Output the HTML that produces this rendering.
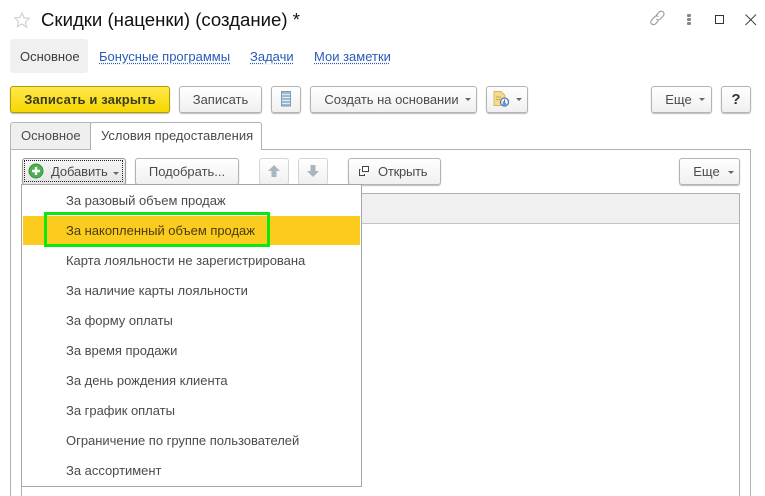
<!DOCTYPE html>
<html><head><meta charset="utf-8">
<style>
html,body{margin:0;padding:0;background:#fff}
#p{position:relative;width:765px;height:496px;overflow:hidden;background:#fff;font-family:"Liberation Sans",sans-serif;font-size:13px;color:#4b4b4b}
#p div,#p svg{position:absolute;box-sizing:border-box}
.t{white-space:nowrap;line-height:16px}
.b{height:27px;border:1px solid #b3b3b3;border-radius:3px;background:linear-gradient(#fff,#f0f0f0);box-shadow:0 1px 1px #bbb;line-height:25px;text-align:center;white-space:nowrap;color:#4b4b4b}
.l{color:#2a5ab8;text-decoration:underline dotted #2a5ab8;text-underline-offset:2px}
.m{left:66px;line-height:16px;white-space:nowrap;color:#4b4b4b;letter-spacing:-.02px}
.a{width:0;height:0;border-left:3px solid transparent;border-right:3px solid transparent;border-top:3px solid #666}
</style></head><body><div id="p">

<svg style="left:13px;top:11px" width="18" height="18" viewBox="0 0 18 18"><path d="M9 2l2.100 4.900 5.200.5-3.900 3.500 1.200 5.200L9 13l-4.600 2.600 1.200-5.200L1.700 6.900l5.200-.5z" fill="#fff" stroke="#d2d2d2" stroke-width="1.200"/></svg>
<div class="t" style="left:41px;top:9px;font-size:18.600px;line-height:22px;color:#111">Скидки (наценки) (создание) *</div>

<svg style="left:648px;top:9px" width="19" height="18" viewBox="0 0 19 18" fill="none" stroke="#999" stroke-width="1.100"><path d="M8 6.500L11 3.200c1.400-1.300 3.300-1.300 4.300-.2s1 2.900-.2 4.100l-2.900 2.900c-1.200 1.100-2.800 1.100-3.800.1"/><path d="M10.500 11.500L7.800 14.600c-1.300 1.300-3.200 1.300-4.300.2s-1-2.800.2-4.100l2.900-2.900c1.200-1.100 2.800-1.100 3.800-.1"/></svg>
<div style="left:687px;top:14px;width:3.500px;height:3px;background:#888;border-radius:1px"></div>
<div style="left:687px;top:18px;width:3.500px;height:3px;background:#888;border-radius:1px"></div>
<div style="left:687px;top:22px;width:3.500px;height:3px;background:#888;border-radius:1px"></div>
<div style="left:715px;top:15px;width:9px;height:9px;border:1px solid #333"></div>
<svg style="left:744px;top:13px" width="14" height="14" viewBox="0 0 14 14"><path d="M1.500 1.500l10.500 10.500M12 1.500L1.500 12" stroke="#444" stroke-width="1" fill="none"/></svg>

<div style="left:10px;top:39px;width:78px;height:34px;background:#f0f0f0;border-radius:3px"></div>
<div class="t" style="left:20px;top:49px;color:#3c3c3c">Основное</div>
<div class="t l" style="left:99px;top:49px">Бонусные программы</div>
<div class="t l" style="left:250px;top:49px">Задачи</div>
<div class="t l" style="left:314px;top:49px">Мои заметки</div>

<div class="b" style="left:10px;top:86px;width:160px;background:linear-gradient(#ffe84d,#f7d700);border-color:#b39c00;font-weight:bold;color:#3c3c1c;letter-spacing:.15px">Записать и закрыть</div>
<div class="b" style="left:179px;top:86px;width:83px">Записать</div>
<div class="b" style="left:271px;top:86px;width:30px"></div>
<svg style="left:281px;top:91px" width="10" height="16" viewBox="0 0 10 16"><rect x=".5" y=".5" width="9" height="14.500" fill="#9dbbd0" stroke="#7f9cb2"/><path d="M1 3.500h8M1 6.500h8M1 9.500h8M1 12.500h8" stroke="#dfeaf1" stroke-width="1"/></svg>
<div class="b" style="left:310px;top:86px;width:167px;padding-right:4px;letter-spacing:-.03px">Создать на основании</div>
<div class="a" style="left:465px;top:98px"></div>
<div class="b" style="left:486px;top:86px;width:42px"></div>
<svg style="left:493px;top:91px" width="18" height="17" viewBox="0 0 18 17"><path d="M1 .5h7l4 4v10H1z" fill="#f2dc8e" stroke="#d9b85c"/><path d="M3 6h5M3 8.500h4" stroke="#c9a648"/><circle cx="11.500" cy="11" r="4" fill="#fff" stroke="#3f7fc4" stroke-width="1.300"/><path d="M11.500 8.500V11h-2" stroke="#d04040" fill="none"/><circle cx="11.500" cy="13" r="1.800" fill="#5c9bd8"/></svg>
<div class="a" style="left:516px;top:98px"></div>
<div class="b" style="left:651px;top:86px;width:61px;padding-right:6px">Еще</div>
<div class="a" style="left:699px;top:98px"></div>
<div class="b" style="left:721px;top:86px;width:30px;font-weight:bold;font-size:15px;color:#333">?</div>

<div style="left:10px;top:149px;width:741px;height:360px;border:1px solid #b0b0b0"></div>
<div style="left:10px;top:122px;width:81px;height:28px;background:#efefef;border:1px solid #b8b8b8;border-radius:3px 0 0 0"></div>
<div class="t" style="left:21px;top:128px">Основное</div>
<div style="left:90px;top:122px;width:172px;height:28px;background:#fff;border:1px solid #b0b0b0;border-bottom:0;border-radius:3px 3px 0 0"></div>
<div class="t" style="left:101px;top:128px">Условия предоставления</div>

<div class="b" style="left:22px;top:158px;width:104px;background:linear-gradient(#f6f6f6,#e4e4e4);border-color:#999"></div>
<div style="left:24px;top:160px;width:99px;height:22px;border:1px dotted #222"></div>
<svg style="left:28px;top:163px" width="16" height="16" viewBox="0 0 16 16"><circle cx="8" cy="8" r="7" fill="#4fb04f" stroke="#3d8f3d"/><path d="M8 4v8M4 8h8" stroke="#fff" stroke-width="2.400"/></svg>
<div class="t" style="left:51px;top:164px;letter-spacing:-.1px">Добавить</div>
<div class="a" style="left:113px;top:172px"></div>
<div class="b" style="left:135px;top:158px;width:104px">Подобрать...</div>
<div class="b" style="left:259px;top:158px;width:30px;border-color:#d4d4d4;box-shadow:none"></div>
<svg style="left:267px;top:164px" width="14" height="14" viewBox="0 0 14 14"><path d="M7 1l6 6H9.500v6h-5V7H1z" fill="#a8b6bd"/></svg>
<div class="b" style="left:298px;top:158px;width:30px;border-color:#d4d4d4;box-shadow:none"></div>
<svg style="left:306px;top:164px" width="14" height="14" viewBox="0 0 14 14"><path d="M7 13l6-6H9.500V1h-5v6H1z" fill="#a8b6bd"/></svg>
<div class="b" style="left:348px;top:158px;width:93px"></div>
<svg style="left:358px;top:165px" width="12" height="12" viewBox="0 0 12 12" fill="none" stroke="#444"><rect x="4.500" y="1.500" width="6" height="5" fill="#fff"/><path d="M2.500 4.500h-1v6h5v-1.500"/></svg>
<div class="t" style="left:378px;top:164px;letter-spacing:-.25px">Открыть</div>
<div class="b" style="left:679px;top:158px;width:61px;padding-right:6px">Еще</div>
<div class="a" style="left:728px;top:171px"></div>

<div style="left:21px;top:193px;width:719px;height:320px;border:1px solid #b0b0b0"></div>
<div style="left:22px;top:194px;width:717px;height:30px;background:#f0f0f0;border-bottom:1px solid #c4c4c4"></div>

<div style="left:21px;top:184px;width:341px;height:303px;background:#fff;border:1px solid #a6a6a6"></div>
<div style="left:23px;top:216px;width:337px;height:29px;background:#fbcb1e"></div>
<div style="left:44px;top:212px;width:226px;height:35px;border:3px solid #0be80b"></div>
<div class="m" style="top:193px">За разовый объем продаж</div>
<div class="m" style="top:223px;color:#4a3c10">За накопленный объем продаж</div>
<div class="m" style="top:253px">Карта лояльности не зарегистрирована</div>
<div class="m" style="top:283px">За наличие карты лояльности</div>
<div class="m" style="top:313px">За форму оплаты</div>
<div class="m" style="top:343px">За время продажи</div>
<div class="m" style="top:373px">За день рождения клиента</div>
<div class="m" style="top:403px">За график оплаты</div>
<div class="m" style="top:433px">Ограничение по группе пользователей</div>
<div class="m" style="top:463px">За ассортимент</div>
</div></body></html>
